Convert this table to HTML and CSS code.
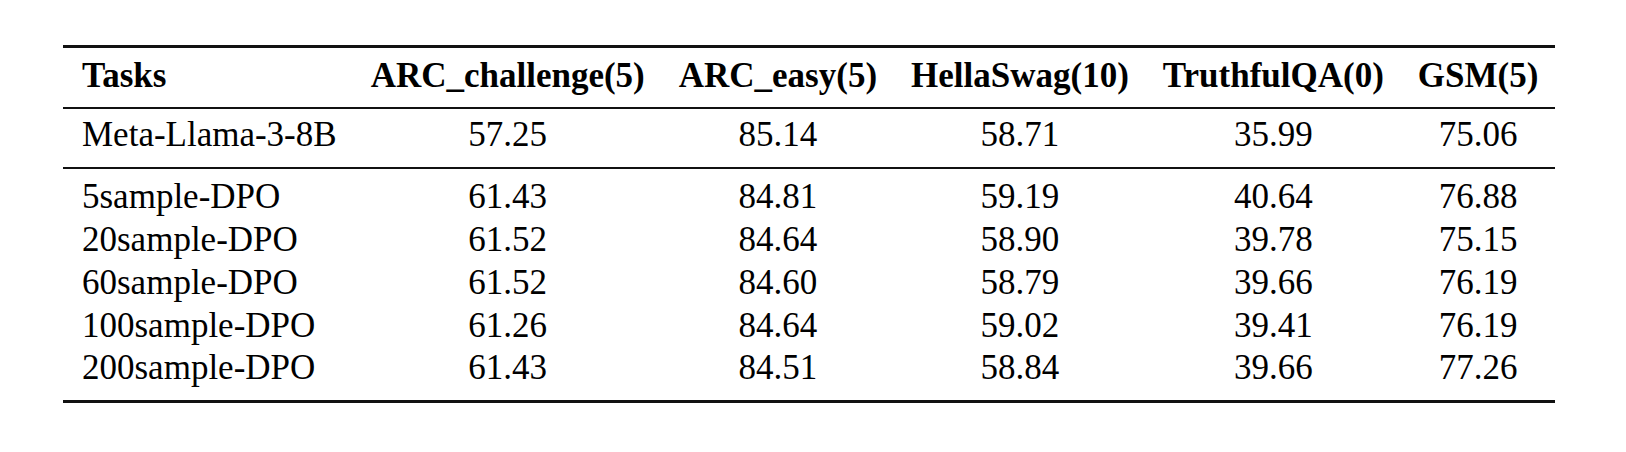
FILE: index.html
```html
<!DOCTYPE html>
<html>
<head>
  <meta name="viewport" content="width=device-width, initial-scale=1.0">
  <link rel="stylesheet" href="styles.css">
</head>
<body>
  <!-- TABLA DE RESULTADOS -->
  <div class="contenedor-tabla">
    <table class="resultados">
      <thead>
        <tr>
          <th class="tarea">Tasks</th>
          <th>ARC_challenge(5)</th>
          <th>ARC_easy(5)</th>
          <th>HellaSwag(10)</th>
          <th>TruthfulQA(0)</th>
          <th>GSM(5)</th>
        </tr>
      </thead>
      <tbody class="base">
        <tr>
          <td class="tarea">Meta-Llama-3-8B</td>
          <td>57.25</td>
          <td>85.14</td>
          <td>58.71</td>
          <td>35.99</td>
          <td>75.06</td>
        </tr>
      </tbody>
      <tbody class="dpo">
        <tr>
          <td class="tarea">5sample-DPO</td>
          <td>61.43</td>
          <td>84.81</td>
          <td>59.19</td>
          <td>40.64</td>
          <td>76.88</td>
        </tr>
        <tr>
          <td class="tarea">20sample-DPO</td>
          <td>61.52</td>
          <td>84.64</td>
          <td>58.90</td>
          <td>39.78</td>
          <td>75.15</td>
        </tr>
        <tr>
          <td class="tarea">60sample-DPO</td>
          <td>61.52</td>
          <td>84.60</td>
          <td>58.79</td>
          <td>39.66</td>
          <td>76.19</td>
        </tr>
        <tr>
          <td class="tarea">100sample-DPO</td>
          <td>61.26</td>
          <td>84.64</td>
          <td>59.02</td>
          <td>39.41</td>
          <td>76.19</td>
        </tr>
        <tr>
          <td class="tarea">200sample-DPO</td>
          <td>61.43</td>
          <td>84.51</td>
          <td>58.84</td>
          <td>39.66</td>
          <td>77.26</td>
        </tr>
      </tbody>
    </table>
  </div>
</body>
</html>
```

FILE: styles.css
```css
/* ESTILOS GENERALES */
body {
  margin: 0;
  background: #ffffff;
  color: #000000;
}

.contenedor-tabla {
  padding: 45px 0 0 63px;
}

/* TABLA */
.resultados {
  border-collapse: collapse;
  border-top: 3px solid #111;
  border-bottom: 3px solid #111;
  font-family: "Liberation Serif", "Times New Roman", serif;
  font-size: 35px;
}

.resultados th,
.resultados td {
  padding: 0 17px;
  text-align: center;
  white-space: nowrap;
  line-height: 42.7px;
}

.resultados th {
  font-weight: bold;
  padding-top: 7px;
  padding-bottom: 9px;
}

.resultados .tarea {
  text-align: left;
  padding-left: 19px;
}

.resultados thead {
  border-bottom: 2px solid #111;
}

/* FILA BASE */
.base {
  border-bottom: 2px solid #111;
}

.base td {
  padding-top: 5px;
  padding-bottom: 11px;
}

/* FILAS DPO */
.dpo tr:first-child td {
  padding-top: 7px;
}

.dpo tr:last-child td {
  padding-bottom: 10px;
}
```
